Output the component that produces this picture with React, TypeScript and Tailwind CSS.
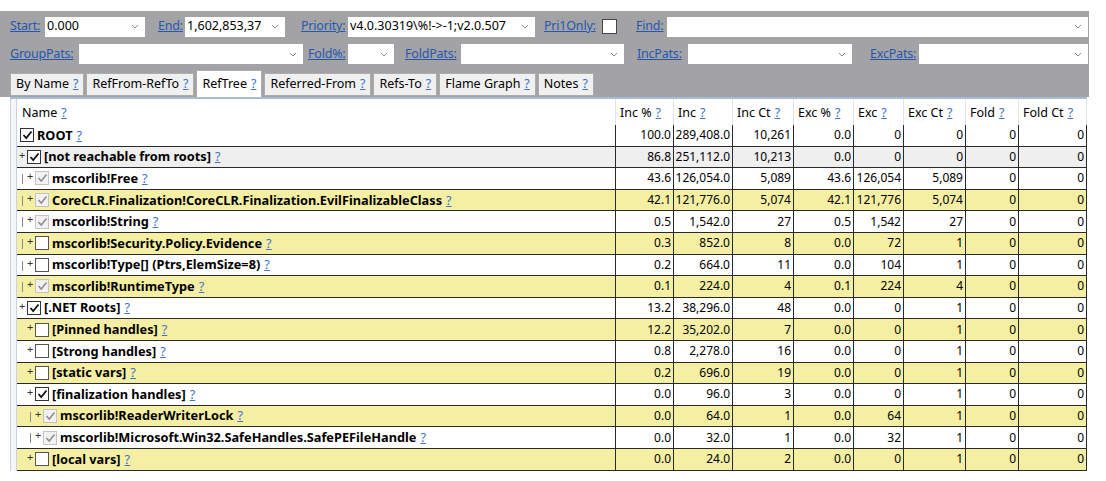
import React from "react";

type Cb = "on" | "dim" | "off";

type Row = {
  name: string;
  level: number;
  plus: boolean;
  bar: boolean;
  cb: Cb;
  bg: string;
  vals: string[];
};

const YEL = "bg-[#f5efa4]";
const WHT = "bg-white";

const rows: Row[] = [
  { name: "ROOT", level: 0, plus: false, bar: false, cb: "on", bg: WHT, vals: ["100.0", "289,408.0", "10,261", "0.0", "0", "0", "0", "0"] },
  { name: "[not reachable from roots]", level: 0, plus: true, bar: false, cb: "on", bg: "bg-[#efefef]", vals: ["86.8", "251,112.0", "10,213", "0.0", "0", "0", "0", "0"] },
  { name: "mscorlib!Free", level: 1, plus: true, bar: true, cb: "dim", bg: WHT, vals: ["43.6", "126,054.0", "5,089", "43.6", "126,054", "5,089", "0", "0"] },
  { name: "CoreCLR.Finalization!CoreCLR.Finalization.EvilFinalizableClass", level: 1, plus: true, bar: true, cb: "dim", bg: YEL, vals: ["42.1", "121,776.0", "5,074", "42.1", "121,776", "5,074", "0", "0"] },
  { name: "mscorlib!String", level: 1, plus: true, bar: true, cb: "dim", bg: WHT, vals: ["0.5", "1,542.0", "27", "0.5", "1,542", "27", "0", "0"] },
  { name: "mscorlib!Security.Policy.Evidence", level: 1, plus: true, bar: true, cb: "off", bg: YEL, vals: ["0.3", "852.0", "8", "0.0", "72", "1", "0", "0"] },
  { name: "mscorlib!Type[] (Ptrs,ElemSize=8)", level: 1, plus: true, bar: true, cb: "off", bg: WHT, vals: ["0.2", "664.0", "11", "0.0", "104", "1", "0", "0"] },
  { name: "mscorlib!RuntimeType", level: 1, plus: true, bar: true, cb: "dim", bg: YEL, vals: ["0.1", "224.0", "4", "0.1", "224", "4", "0", "0"] },
  { name: "[.NET Roots]", level: 0, plus: true, bar: false, cb: "on", bg: WHT, vals: ["13.2", "38,296.0", "48", "0.0", "0", "1", "0", "0"] },
  { name: "[Pinned handles]", level: 1, plus: true, bar: false, cb: "off", bg: YEL, vals: ["12.2", "35,202.0", "7", "0.0", "0", "1", "0", "0"] },
  { name: "[Strong handles]", level: 1, plus: true, bar: false, cb: "off", bg: WHT, vals: ["0.8", "2,278.0", "16", "0.0", "0", "1", "0", "0"] },
  { name: "[static vars]", level: 1, plus: true, bar: false, cb: "off", bg: YEL, vals: ["0.2", "696.0", "19", "0.0", "0", "1", "0", "0"] },
  { name: "[finalization handles]", level: 1, plus: true, bar: false, cb: "on", bg: WHT, vals: ["0.0", "96.0", "3", "0.0", "0", "1", "0", "0"] },
  { name: "mscorlib!ReaderWriterLock", level: 2, plus: true, bar: true, cb: "dim", bg: YEL, vals: ["0.0", "64.0", "1", "0.0", "64", "1", "0", "0"] },
  { name: "mscorlib!Microsoft.Win32.SafeHandles.SafePEFileHandle", level: 2, plus: true, bar: true, cb: "dim", bg: WHT, vals: ["0.0", "32.0", "1", "0.0", "32", "1", "0", "0"] },
  { name: "[local vars]", level: 1, plus: true, bar: false, cb: "off", bg: YEL, vals: ["0.0", "24.0", "2", "0.0", "0", "1", "0", "0"] },
];

const headers = ["Inc %", "Inc", "Inc Ct", "Exc %", "Exc", "Exc Ct", "Fold", "Fold Ct"];
const GRID = "grid grid-cols-[7px_599px_58px_59px_61px_60px_50px_62px_53px_68px]";

const Q = () => <span className="ml-[4px] font-normal text-[#3d72c8] underline">?</span>;

const Label = ({ text, w, ml }: { text: string; w: string; ml: string }) => (
  <span className={`${w} ${ml} shrink-0 whitespace-nowrap text-[12.5px] tracking-[-0.2px] text-[#2457b0] underline`}>{text}</span>
);

const Chevron = () => (
  <svg width="8" height="5" viewBox="0 0 8 5" className="shrink-0">
    <path d="M1 1 L4 4 L7 1" stroke="#8a8a8a" strokeWidth="1" fill="none" />
  </svg>
);

const Combo = ({ value, w }: { value?: string; w: string }) => (
  <div className={`${w} ml-[2px] flex h-[20px] shrink-0 items-center justify-between bg-white pl-[2px] pr-[6px]`}>
    <span className="truncate text-[12.5px] text-black">{value}</span>
    <Chevron />
  </div>
);

const Check = ({ kind }: { kind: Cb }) => {
  if (kind === "on")
    return (
      <span className="flex h-[14px] w-[14px] shrink-0 items-center justify-center border border-[#333] bg-white">
        <svg width="11" height="10" viewBox="0 0 11 10">
          <path d="M1.5 5 L4.2 8 L9.5 1.5" stroke="#111" strokeWidth="1.8" fill="none" />
        </svg>
      </span>
    );
  if (kind === "dim")
    return (
      <span className="flex h-[14px] w-[14px] shrink-0 items-center justify-center border border-[#c4c4c4] bg-[#f2f2f2]">
        <svg width="11" height="10" viewBox="0 0 11 10">
          <path d="M1.5 5 L4.2 8 L9.5 1.5" stroke="#8c8c8c" strokeWidth="1.5" fill="none" />
        </svg>
      </span>
    );
  return <span className="h-[14px] w-[14px] shrink-0 border border-[#555] bg-white" />;
};

const tabs = ["By Name", "RefFrom-RefTo", "RefTree", "Referred-From", "Refs-To", "Flame Graph", "Notes"];

export default function App() {
  return (
    <div className="h-[481px] w-[1106px] overflow-hidden bg-white font-['Noto_Sans',sans-serif] text-black">
      <div className="h-[11px]" />
      <div className="w-[1089px] bg-[#a3a3a6] pl-[10px] pr-[1px]">
        <div className="flex h-[30px] items-center pt-[1px]">
          <Label text="Start:" w="w-[33px]" ml="ml-0" />
          <Combo value="0.000" w="w-[100px]" />
          <Label text="End:" w="w-[25px]" ml="ml-[13px]" />
          <Combo value="1,602,853,37" w="w-[100px]" />
          <Label text="Priority:" w="w-[45px]" ml="ml-[16px]" />
          <Combo value="v4.0.30319\%!->-1;v2.0.507" w="w-[187px]" />
          <Label text="Pri1Only:" w="w-[56px]" ml="ml-[9px]" />
          <span className="ml-[2px] h-[15px] w-[15px] shrink-0 border border-[#444] bg-white" />
          <Label text="Find:" w="w-[29px]" ml="ml-[19px]" />
          <div className="ml-[2px] flex h-[20px] flex-1 items-center justify-end bg-white pr-[6px]">
            <Chevron />
          </div>
        </div>
        <div className="flex h-[26px] items-center">
          <Label text="GroupPats:" w="w-[67px]" ml="ml-0" />
          <Combo w="w-[224px]" />
          <Label text="Fold%:" w="w-[38px]" ml="ml-[5px]" />
          <Combo w="w-[46px]" />
          <Label text="FoldPats:" w="w-[54px]" ml="ml-[11px]" />
          <Combo w="w-[163px]" />
          <Label text="IncPats:" w="w-[49px]" ml="ml-[13px]" />
          <Combo w="w-[164px]" />
          <Label text="ExcPats:" w="w-[47px]" ml="ml-[18px]" />
          <div className="ml-[2px] flex h-[20px] flex-1 items-center justify-end bg-white pr-[6px]">
            <Chevron />
          </div>
        </div>
        <div className="flex h-[30px] items-end gap-[2px] pb-0">
          {tabs.map((t) =>
            t === "RefTree" ? (
              <div key={t} className="flex h-[27px] items-center border border-b-0 border-[#acacac] bg-white px-[5px] text-[12.5px]">
                {t}
                <span className="ml-[4px] text-[#3d72c8] underline">?</span>
              </div>
            ) : (
              <div key={t} className="mb-[1px] flex h-[23px] items-center border border-[#acacac] bg-[#f0f0f0] px-[5px] text-[12.5px]">
                {t}
                <span className="ml-[4px] text-[#3d72c8] underline">?</span>
              </div>
            )
          )}
        </div>
      </div>
      <div className="ml-[10px] w-[1077px] border-t-2 border-[#a9bcd6]">
        <div className={`${GRID} h-[26px] bg-white text-[12.5px]`}>
          <div className="border-l border-r border-[#c9d3df] bg-[#f5f5f5]" />
          <div className="flex items-center border-r border-[#e2e2e2] pl-[5px] pt-[2px]">
            Name<Q />
          </div>
          {headers.map((h) => (
            <div key={h} className="flex items-center border-r border-[#e2e2e2] pl-[4px] pt-[2px] whitespace-nowrap">
              {h}
              <Q />
            </div>
          ))}
        </div>
        {rows.map((r, i) => (
          <div key={i} className={`${GRID} h-[21.6px] ${r.bg}`}>
            <div className="border-l border-r border-[#c9d3df] bg-[#f5f5f5]" />
            <div className="flex items-center border-r border-b border-[#2a2a2a] pl-[2px] text-[12.75px] font-bold whitespace-nowrap">
              {r.level > 0 && (
                <span className={`relative shrink-0 ${r.level === 1 ? "w-[8px]" : "w-[16px]"} h-full`}>
                  {r.bar && (
                    <span className={`absolute top-[6px] h-[10px] w-px bg-[#8a8a8a] ${r.level === 1 ? "left-[3px]" : "left-[11px]"}`} />
                  )}
                </span>
              )}
              {r.plus ? (
                <span className="w-[8px] shrink-0 -translate-y-[2px] text-[11px] font-normal text-[#333]">+</span>
              ) : (
                <span className="w-[1px] shrink-0" />
              )}
              <Check kind={r.cb} />
              <span className="ml-[3px]">{r.name}</span>
              <Q />
            </div>
            {r.vals.map((v, j) => (
              <div key={j} className="flex items-center justify-end border-r border-b border-[#2a2a2a] pr-[2px] text-[12px]">
                {v}
              </div>
            ))}
          </div>
        ))}
      </div>
    </div>
  );
}
